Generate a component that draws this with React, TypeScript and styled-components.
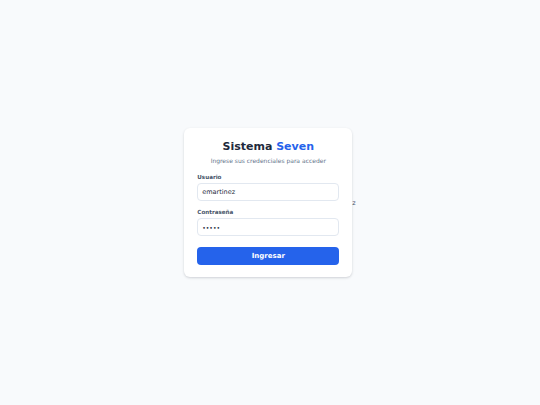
import React from "react";
import styled, { createGlobalStyle } from "styled-components";

const Global = createGlobalStyle`
  html, body { margin: 0; padding: 0; }
  body { background: #f8fafc; font-family: "DejaVu Sans", "Noto Sans", sans-serif; }
  * { box-sizing: border-box; }
`;

const Page = styled.div`
  width: 540px;
  height: 405px;
  display: flex;
  align-items: center;
  justify-content: center;
`;

const Card = styled.div`
  width: 168px;
  background: #ffffff;
  border-radius: 6px;
  box-shadow: 0 1px 3px rgba(15, 23, 42, 0.12), 0 1px 2px rgba(15, 23, 42, 0.06);
  padding: 12px 13px 12px;
  display: flex;
  flex-direction: column;
`;

const Title = styled.h1`
  margin: 0;
  text-align: center;
  font-size: 11px;
  line-height: 14px;
  font-weight: 700;
  color: #1e293b;
`;

const Accent = styled.span`
  color: #2563eb;
`;

const Subtitle = styled.p`
  margin: 2px 0 0;
  text-align: center;
  font-size: 6px;
  line-height: 9px;
  color: #64748b;
`;

const Form = styled.form`
  margin-top: 8px;
  display: flex;
  flex-direction: column;
`;

const Field = styled.div<{ $mb: number }>`
  display: flex;
  flex-direction: column;
  gap: 2px;
  margin-bottom: ${(p) => p.$mb}px;
`;

const Label = styled.label`
  font-size: 5.6px;
  line-height: 8px;
  font-weight: 700;
  color: #475569;
`;

const Input = styled.div`
  height: 18px;
  border: 1px solid #e2e8f0;
  border-radius: 4px;
  padding: 0 4px;
  display: flex;
  align-items: center;
  font-size: 6.5px;
  color: #1e293b;
`;

const Dots = styled.span`
  font-size: 6px;
  letter-spacing: 0;
`;

const Button = styled.button`
  height: 18px;
  border: none;
  border-radius: 4px;
  background: #2563eb;
  color: #ffffff;
  font-family: inherit;
  font-size: 7px;
  font-weight: 700;
  cursor: pointer;
`;

const Stray = styled.span`
  font-size: 6.5px;
  line-height: 7px;
  color: #475569;
  margin-top: 2px;
`;

export default function App() {
  return (
    <>
      <Global />
      <Page>
        <Card>
          <Title>
            Sistema <Accent>Seven</Accent>
          </Title>
          <Subtitle>Ingrese sus credenciales para acceder</Subtitle>
          <Form onSubmit={(e) => e.preventDefault()}>
            <Field $mb={7}>
              <Label>Usuario</Label>
              <Input>emartinez</Input>
            </Field>
            <Field $mb={11}>
              <Label>Contraseña</Label>
              <Input>
                <Dots>•••••</Dots>
              </Input>
            </Field>
            <Button type="submit">Ingresar</Button>
          </Form>
        </Card>
        <Stray>z</Stray>
      </Page>
    </>
  );
}
